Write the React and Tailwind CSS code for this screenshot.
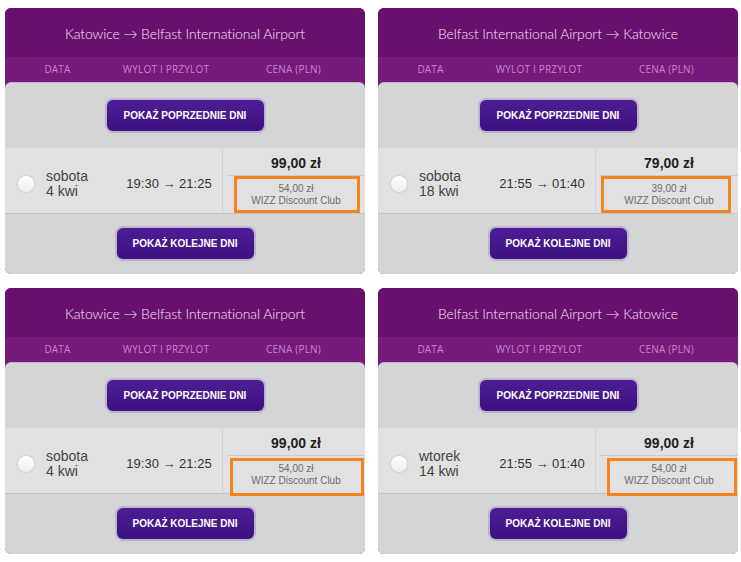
import React from "react";

const flights = [
  {
    title: "Katowice → Belfast International Airport",
    day: "sobota",
    date: "4 kwi",
    times: "19:30 → 21:25",
    price: "99,00 zł",
    club: "54,00 zł",
    mark: "left-[11px] top-[28px] w-[126px] h-[37px]",
  },
  {
    title: "Belfast International Airport → Katowice",
    day: "sobota",
    date: "18 kwi",
    times: "21:55 → 01:40",
    price: "79,00 zł",
    club: "39,00 zł",
    mark: "left-[5px] top-[28px] w-[130px] h-[37px]",
  },
  {
    title: "Katowice → Belfast International Airport",
    day: "sobota",
    date: "4 kwi",
    times: "19:30 → 21:25",
    price: "99,00 zł",
    club: "54,00 zł",
    mark: "left-[7px] top-[30px] w-[134px] h-[38px]",
  },
  {
    title: "Belfast International Airport → Katowice",
    day: "wtorek",
    date: "14 kwi",
    times: "21:55 → 01:40",
    price: "99,00 zł",
    club: "54,00 zł",
    mark: "left-[11px] top-[30px] w-[130px] h-[38px]",
  },
];

const DayButton = ({ label, width }) => (
  <div className={`rounded-[8px] bg-[#bcb1cf] p-[2px] ${width}`}>
    <button className="h-[31px] w-full rounded-[6px] bg-gradient-to-b from-[#4d1e96] to-[#3c1180] text-[10px] font-bold text-white [font-family:'Liberation_Sans',Arial,sans-serif]">
      {label}
    </button>
  </div>
);

const FlightCard = ({ flight }) => (
  <div className="w-[360px] overflow-hidden rounded-[6px] bg-[#761a7b]">
    {/* Header */}
    <div className="flex h-[49px] items-center justify-center bg-[#69106e] pt-[2px] text-[14px] font-light text-[#f3e8f3] [font-family:Lato,'Open_Sans',sans-serif]">
      <span className="tracking-[-0.1px]">{flight.title}</span>
    </div>
    <div className="flex h-[25px] items-center bg-[#761a7b] text-[10px] tracking-[0.2px] text-[#c585c9] [font-family:'Open_Sans',sans-serif]">
      <div className="w-[105px] text-center">DATA</div>
      <div className="w-[112px] text-center">WYLOT I PRZYLOT</div>
      <div className="flex-1 text-center">CENA (PLN)</div>
    </div>

    {/* Body */}
    <div className="rounded-t-[6px] border-t border-[#cfa8d1] bg-[#d5d5d5] [font-family:'Liberation_Sans',Arial,sans-serif]">
      <div className="flex h-[65px] items-center justify-center">
        <DayButton label="POKAŻ POPRZEDNIE DNI" width="w-[161px]" />
      </div>

      <div className="flex h-[66px] border-b border-[#c4c4c4] bg-[#e1e1e1]">
        <div className="flex w-[105px] items-center pt-[6px]">
          <span className="ml-[13px] h-[16px] w-[16px] rounded-full bg-gradient-to-b from-[#ffffff] to-[#eeeeee] shadow-[0_0_2px_rgba(0,0,0,0.25)]" />
          <div className="ml-[12px] text-[14px] leading-[15px] text-[#444]">
            <div>{flight.day}</div>
            <div>{flight.date}</div>
          </div>
        </div>
        <div className="flex w-[112px] items-center justify-center pl-[6px] pt-[6px] text-[13px] text-[#333]">
          {flight.times}
        </div>
        <div className="relative flex flex-1 flex-col border-l border-[#d2d2d2] pl-[4px]">
          <div className="flex h-[27px] items-end justify-center pb-[1px] text-[14px] font-bold text-[#222]">
            {flight.price}
          </div>
          <div className="border-t border-[#cbcbcb] pt-[7px] text-center text-[10px] leading-[12px] text-[#6b6b6b]">
            <div>{flight.club}</div>
            <div>WIZZ Discount Club</div>
          </div>
          <div className={`absolute border-[3px] border-[#f5841f] ${flight.mark}`} />
        </div>
      </div>

      <div className="flex h-[60px] items-center justify-center pb-[2px]">
        <DayButton label="POKAŻ KOLEJNE DNI" width="w-[141px]" />
      </div>
    </div>
  </div>
);

export default function App() {
  return (
    <div className="min-h-[562px] w-[741px] bg-white pl-[5px] pt-[8px]">
      <div className="grid grid-cols-[360px_360px] gap-x-[13px] gap-y-[14px]">
        {flights.map((f, i) => (
          <FlightCard key={i} flight={f} />
        ))}
      </div>
    </div>
  );
}
